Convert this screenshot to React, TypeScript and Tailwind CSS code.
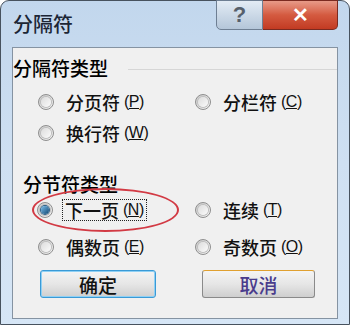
import React from "react";

const CJK = { fontFamily: '"Noto Sans CJK SC", "Noto Sans", sans-serif' };
const LAT = { fontFamily: '"Liberation Sans", Arial, sans-serif' };

function Radio({ checked }: { checked?: boolean }) {
  return (
    <span className="relative flex h-[16px] w-[16px] shrink-0 items-center justify-center rounded-full border border-[#8e8e8e] bg-gradient-to-br from-[#c8c8c8] to-[#f6f6f6]">
      <span className="h-[10px] w-[10px] rounded-full bg-gradient-to-br from-[#dcdcdc] to-[#fbfbfb] ring-1 ring-[#bdbdbd]" />
      {checked && (
        <span className="absolute h-[8px] w-[8px] rounded-full bg-gradient-to-br from-[#7cc0ee] to-[#0f4a74] ring-1 ring-[#2a5d85]" />
      )}
    </span>
  );
}

function Opt({ label, k, checked, focus, w }: { label: string; k: string; checked?: boolean; focus?: boolean; w: string }) {
  return (
    <div className={`flex items-center ${w}`}>
      <Radio checked={checked} />
      <span
        className={`ml-[9px] flex items-center px-[2px] text-[18px] font-medium leading-[20px] text-[#111] ${focus ? "border border-dotted border-[#222]" : "border border-transparent"}`}
        style={CJK}
      >
        {label}
        <span className="ml-[4px] text-[16px] tracking-[-0.5px]" style={LAT}>
          (<span className="underline">{k}</span>)
        </span>
      </span>
    </div>
  );
}

export default function App() {
  return (
    <div className="h-[325px] w-[350px] overflow-hidden bg-white">
      <div className="flex h-full flex-col rounded-t-[9px] border border-[#47525e] bg-gradient-to-b from-[#c2d7ed] via-[#cfe0f2] to-[#d6e6f6] px-[11px] pb-[5px]">
        <div className="flex h-[46px] shrink-0 items-start justify-between">
          <div className="ml-[1px] mt-[11px] text-[20px] font-medium leading-[24px] text-[#1c2635]" style={CJK}>
            分隔符
          </div>
          <div className="-mt-[1px] flex">
            <div className="flex h-[30px] w-[47px] items-center justify-center rounded-bl-[5px] border border-[#6e7f93] bg-gradient-to-b from-[#e3ecf5] to-[#b4c6d9]">
              <span className="text-[22px] font-bold leading-none text-[#56606c]" style={LAT}>?</span>
            </div>
            <div className="flex h-[30px] w-[75px] items-center justify-center rounded-br-[5px] border border-l-0 border-[#7a2a20] bg-gradient-to-b from-[#e79a88] via-[#d45a40] to-[#c23a22]">
              <span className="text-[20px] font-bold leading-none text-white" style={LAT}>✕</span>
            </div>
          </div>
        </div>
        <div className="relative flex-1 border border-[#8593a2] bg-[#f0f0f0] pt-[9px]">
          <div className="flex items-center">
            <span className="text-[19px] font-medium leading-[22px] text-black" style={CJK}>分隔符类型</span>
            <span className="ml-[20px] mt-[2px] h-px flex-1 bg-[#d6d6d6]" />
          </div>
          <div className="mt-[8px] flex h-[30px] items-center pl-[25px]">
            <Opt label="分页符" k="P" w="w-[157px]" />
            <Opt label="分栏符" k="C" w="w-[130px]" />
          </div>
          <div className="flex h-[31px] items-center pl-[25px]">
            <Opt label="换行符" k="W" w="w-[157px]" />
          </div>
          <div className="mt-[25px] pl-[10px] text-[19px] font-medium leading-[22px] text-black" style={CJK}>
            分节符类型
          </div>
          <div className="flex h-[30px] items-center pl-[24px]">
            <Opt label="下一页" k="N" checked focus w="w-[158px]" />
            <Opt label="连续" k="T" w="w-[130px]" />
          </div>
          <div className="mt-[7px] flex h-[30px] items-center pl-[25px]">
            <Opt label="偶数页" k="E" w="w-[157px]" />
            <Opt label="奇数页" k="O" w="w-[130px]" />
          </div>
          <div className="mt-[8px] flex pl-[27px]">
            <div className="flex h-[28px] w-[116px] items-center justify-center rounded-[3px] border border-[#3a9ad6] bg-gradient-to-b from-[#f4f4f4] via-[#e6e6e6] to-[#cfcfcf] shadow-[inset_0_0_0_1px_#8fd0f4]">
              <span className="text-[19px] font-medium leading-none text-[#111]" style={CJK}>确定</span>
            </div>
            <div className="ml-[46px] flex h-[28px] w-[113px] items-center justify-center rounded-[3px] border border-[#8a8a8a] border-t-[#e0a030] bg-gradient-to-b from-[#f4f4f4] via-[#e6e6e6] to-[#cfcfcf]">
              <span className="text-[19px] font-medium leading-none text-[#4a3c8c]" style={CJK}>取消</span>
            </div>
          </div>
          <div className="pointer-events-none absolute left-[19px] top-[140px] h-[44px] w-[147px] rounded-[50%] border-2 border-[#d23a44]" />
        </div>
      </div>
    </div>
  );
}
